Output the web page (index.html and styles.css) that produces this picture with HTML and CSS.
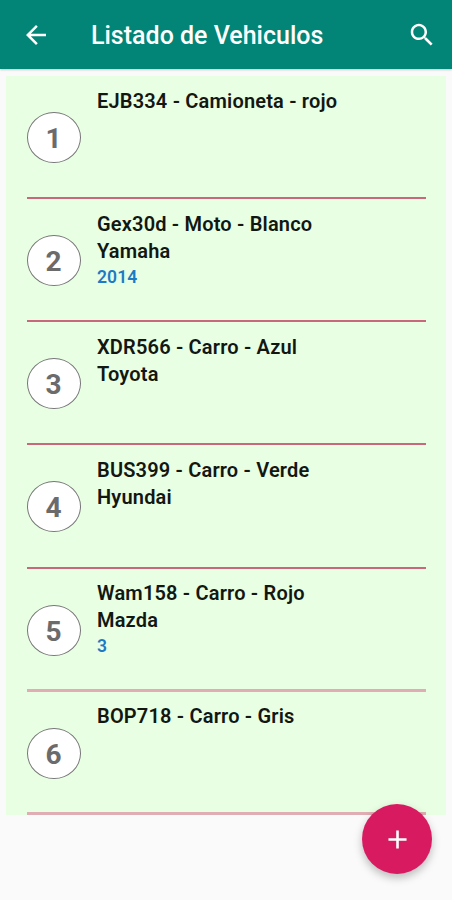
FILE: index.html
```html
<!DOCTYPE html>
<html lang="es">
<head>
    <meta charset="UTF-8">
    <title>Listado de Vehiculos</title>
    <link rel="stylesheet" href="styles.css">
</head>
<body>

    <header class="toolbar">
        <svg class="back" viewBox="0 0 24 24"><path d="M20 11H7.83l5.59-5.59L12 4l-8 8 8 8 1.41-1.41L7.83 13H20v-2z"/></svg>
        <h1>Listado de Vehiculos</h1>
        <svg class="search" viewBox="0 0 24 24"><path d="M15.5 14h-.79l-.28-.27C15.41 12.59 16 11.11 16 9.5 16 5.91 13.09 3 9.5 3S3 5.91 3 9.5 5.91 16 9.5 16c1.61 0 3.09-.59 4.23-1.57l.27.28v.79l5 4.99L20.49 19l-4.99-5zm-6 0C7.01 14 5 11.99 5 9.5S7.01 5 9.5 5 14 7.01 14 9.5 11.99 14 9.5 14z"/></svg>
    </header>

    <main class="list">
        <div class="item">
            <span class="number">1</span>
            <div class="info">
                <p>EJB334 - Camioneta - rojo</p>
            </div>
        </div>
        <div class="item">
            <span class="number">2</span>
            <div class="info">
                <p>Gex30d - Moto - Blanco</p>
                <p>Yamaha</p>
                <p class="model">2014</p>
            </div>
        </div>
        <div class="item">
            <span class="number">3</span>
            <div class="info">
                <p>XDR566 - Carro - Azul</p>
                <p>Toyota</p>
            </div>
        </div>
        <div class="item">
            <span class="number">4</span>
            <div class="info">
                <p>BUS399 - Carro - Verde</p>
                <p>Hyundai</p>
            </div>
        </div>
        <div class="item soft">
            <span class="number">5</span>
            <div class="info">
                <p>Wam158 - Carro - Rojo</p>
                <p>Mazda</p>
                <p class="model">3</p>
            </div>
        </div>
        <div class="item soft">
            <span class="number">6</span>
            <div class="info">
                <p>BOP718 - Carro - Gris</p>
            </div>
        </div>
    </main>

    <button class="fab" aria-label="Agregar">
        <svg viewBox="0 0 24 24"><path d="M19 13h-6v6h-2v-6H5v-2h6V5h2v6h6v2z"/></svg>
    </button>

</body>
</html>
```

FILE: styles.css
```css
* {
    box-sizing: border-box;
}
body {
    margin: 0;
    height: 900px;
    overflow: hidden;
    background-color: #fafafa;
    font-family: Roboto, sans-serif;
}
.toolbar {
    display: flex;
    align-items: center;
    height: 69px;
    padding: 0 15px 0 21px;
    background-color: #028577;
    box-shadow: 0 1px 2px rgba(0,0,0,0.2);
}
.toolbar svg {
    width: 30px;
    height: 30px;
    fill: #fff;
}
h1 {
    flex: 1;
    margin: 3px 0 0 40px;
    color: #fff;
    font-size: 25px;
    font-weight: 500;
    line-height: 30px;
}
.list {
    margin: 7px 6px 0;
    padding: 0 20px 0 21px;
    background-color: #e9ffe4;
}
.item {
    display: flex;
    height: 123.2px;
    border-bottom: 2px solid #c9687c;
}
.item:first-child {
    height: 123px;
}
.item.soft {
    border-bottom: 3px solid #dfadb3;
}
.number {
    display: flex;
    align-items: center;
    justify-content: center;
    width: 54px;
    height: 51px;
    margin: 36px 16px 0 0;
    border: 1px solid #777;
    border-radius: 50%;
    background-color: #fff;
    color: #6b6b6b;
    font-size: 28px;
    font-weight: 700;
    padding: 2px 1px 0 0;
}
.info {
    padding-top: 11.6px;
}
.info p {
    margin: 0;
    color: #121712;
    font-size: 20px;
    font-weight: 600;
    line-height: 27px;
    letter-spacing: 0.18px;
}
.info .model {
    color: #1c7bc4;
    font-size: 17.5px;
    line-height: 24px;
    letter-spacing: 0.1px;
}
.fab {
    position: absolute;
    left: 362px;
    top: 804px;
    display: flex;
    align-items: center;
    justify-content: center;
    width: 70px;
    height: 70px;
    padding: 0;
    border: none;
    border-radius: 50%;
    background-color: #d81b60;
    box-shadow: 0 4px 8px rgba(0,0,0,0.25);
}
.fab svg {
    width: 31px;
    height: 31px;
    fill: #fff;
}
```
